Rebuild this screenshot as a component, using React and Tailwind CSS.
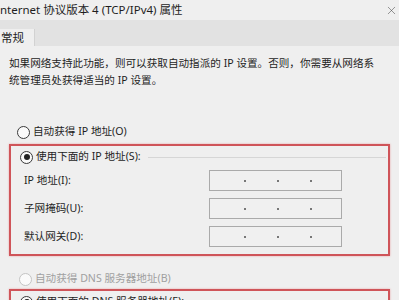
import { X } from "lucide-react";

const Radio = ({ checked = false, disabled = false }) => (
  <span
    className={`flex h-[13px] w-[13px] shrink-0 items-center justify-center rounded-full border bg-[#fafafa] ${
      disabled ? "border-[#c4c4c4]" : "border-[#3a3a3a]"
    }`}
  >
    {checked && <span className="h-[6px] w-[6px] rounded-full bg-[#222]" />}
  </span>
);

const IpInput = () => (
  <div className="flex h-[21px] w-[133px] items-center border border-[#aaaaaa] bg-[#f0f0f0] pl-[34px]">
    <span className="h-[2px] w-[2px] bg-[#777]" />
    <span className="ml-[31px] h-[2px] w-[2px] bg-[#777]" />
    <span className="ml-[31px] h-[2px] w-[2px] bg-[#777]" />
  </div>
);

const fields = ["IP 地址(I):", "子网掩码(U):", "默认网关(D):"];

export default function App() {
  return (
    <div className="h-[300px] w-[399px] overflow-hidden bg-[#efefef] font-['Noto_Sans','Noto_Sans_CJK_SC',sans-serif] text-[10.6px] text-[#1e1e1e]">
      {/* title bar */}
      <div className="flex h-[20px] items-center justify-between">
        <span className="ml-[-4px] text-[11.5px] whitespace-nowrap">
          Internet 协议版本 4 (TCP/IPv4) 属性
        </span>
        <X size={13} strokeWidth={1} className="mr-[1px] text-[#444]" />
      </div>

      {/* tabs */}
      <div className="flex h-[26px] items-end bg-[#e2e2e2]">
        <div className="flex h-[17px] w-[35px] items-center border-r border-[#d2d2d2] bg-[#efefef] pl-[1px] text-[11.5px]">
          常规
        </div>
      </div>

      {/* description */}
      <p className="px-[9px] pt-[9px] leading-[17px] whitespace-nowrap">
        如果网络支持此功能，则可以获取自动指派的 IP 设置。否则，你需要从网络系
        <br />
        统管理员处获得适当的 IP 设置。
      </p>

      <div className="mt-[32px] flex h-[22px] items-center gap-[3px] pl-[17px]">
        <Radio />
        <span>自动获得 IP 地址(O)</span>
      </div>

      {/* static address */}
      <div className="mx-[9px] mt-[1px] border-2 border-[#cf5459] shadow-[0_0_2px_#eaa5a8] pb-[7px]">
        <div className="flex h-[22px] items-center gap-[3px] pl-[9px]">
          <Radio checked />
          <span className="whitespace-nowrap">使用下面的 IP 地址(S):</span>
          <span className="ml-[4px] mr-[2px] h-px flex-1 bg-[#d6d6d6]" />
        </div>
        <div className="mt-[2px] flex flex-col gap-[7px]">
          {fields.map((label) => (
            <div key={label} className="flex items-center pl-[13px]">
              <span className="w-[185px]">{label}</span>
              <IpInput />
            </div>
          ))}
        </div>
      </div>

      <div className="mt-[13px] flex h-[20px] items-center gap-[3px] pl-[19px] text-[#a0a0a0]">
        <Radio disabled />
        <span>自动获得 DNS 服务器地址(B)</span>
      </div>

      <div className="mx-[9px] border-2 border-[#cf5459] shadow-[0_0_2px_#eaa5a8]">
        <div className="flex h-[22px] items-center gap-[3px] pl-[9px]">
          <Radio checked />
          <span className="whitespace-nowrap">使用下面的 DNS 服务器地址(E):</span>
        </div>
      </div>
    </div>
  );
}
